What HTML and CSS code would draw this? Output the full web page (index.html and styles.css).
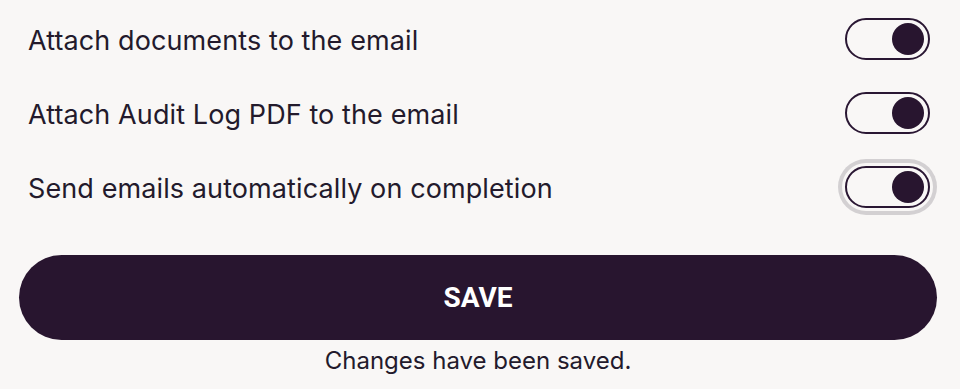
FILE: index.html
```html
<!DOCTYPE html>
<html lang="en">
<head>
<meta charset="utf-8">
<title>Email settings</title>
<link rel="stylesheet" href="styles.css">
</head>
<body>
<div class="panel">
  <div class="rows">
    <div class="row">
      <span class="label">Attach documents to the email</span>
      <span class="toggle"><span class="knob"></span></span>
    </div>
    <div class="row">
      <span class="label">Attach Audit Log PDF to the email</span>
      <span class="toggle"><span class="knob"></span></span>
    </div>
    <div class="row">
      <span class="label">Send emails automatically on completion</span>
      <span class="toggle focused"><span class="knob"></span></span>
    </div>
  </div>
  <button class="save">SAVE</button>
  <p class="status">Changes have been saved.</p>
</div>
</body>
</html>
```
FILE: styles.css
```css
html, body {
  margin: 0;
  padding: 0;
  background: #f9f7f6;
}
body {
  font-family: Inter, "Noto Sans", sans-serif;
  color: #231a2c;
}
.panel {
  padding: 3px 23px 0 19px;
}
.rows {
  padding: 0 7px 0 9px;
}
.row {
  height: 74px;
  display: flex;
  align-items: center;
  justify-content: space-between;
}
.label {
  font-size: 27px;
  letter-spacing: 0.1px;
}
.toggle {
  box-sizing: border-box;
  width: 85px;
  height: 42px;
  border: 2px solid #2a1733;
  border-radius: 21px;
  display: flex;
  align-items: center;
  justify-content: flex-end;
  padding-right: 4px;
  margin-top: -3px;
}
.toggle.focused {
  box-shadow: 0 0 0 3px #f9f7f6, 0 0 0 7px #d3d0d2;
}
.knob {
  width: 32px;
  height: 32px;
  border-radius: 50%;
  background: #28152f;
}
.save {
  display: block;
  width: 918px;
  height: 85px;
  margin: 30px 0 0 0;
  border: none;
  border-radius: 43px;
  background: #28152f;
  color: #fff;
  font-family: Roboto, sans-serif;
  font-weight: 700;
  font-size: 28px;
  cursor: pointer;
}
.status {
  margin: 6px 0 0 0;
  text-align: center;
  font-size: 24px;
  width: 918px;
}
```
